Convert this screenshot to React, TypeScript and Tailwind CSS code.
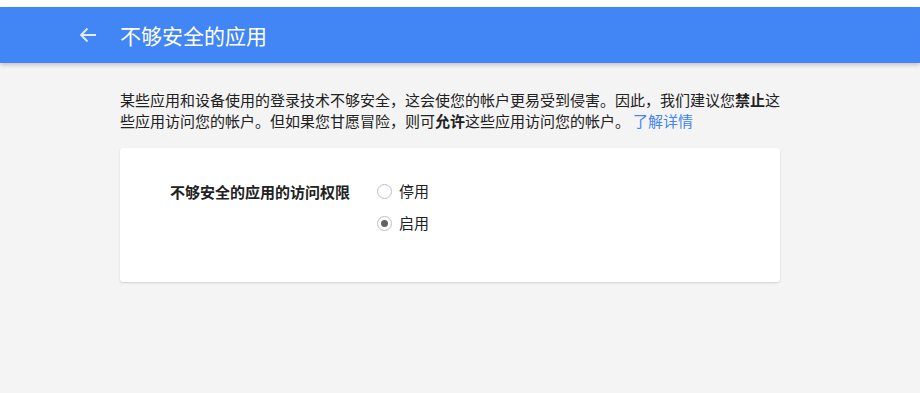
import React from "react";

function Radio({ checked, label }: { checked: boolean; label: string }) {
  return (
    <div className="flex items-center h-[20px]">
      <span className="w-[15px] h-[15px] rounded-full border border-[#bdbdbd] bg-white flex items-center justify-center">
        {checked && <span className="w-[7px] h-[7px] rounded-full bg-[#616161]" />}
      </span>
      <span className="ml-[7px] text-[15px] text-[#212121]">{label}</span>
    </div>
  );
}

export default function App() {
  return (
    <div
      className="w-[920px] h-[393px] bg-[#f4f4f4] overflow-hidden"
      style={{ fontFamily: '"Noto Sans CJK SC", "Noto Sans", sans-serif' }}
    >
      <div className="h-[7px] bg-white" />
      <div className="h-[56px] bg-[#4285f4] flex items-center shadow-[0_2px_4px_rgba(0,0,0,0.2)] relative">
        <svg className="ml-[78px] w-[20px] h-[20px]" viewBox="0 0 20 20" fill="none">
          <path d="M18 10H3M9.5 3.5L3 10l6.5 6.5" stroke="#e3ecfd" strokeWidth="1.8" />
        </svg>
        <span className="ml-[22px] text-[21px] text-white leading-none">不够安全的应用</span>
      </div>
      <div className="w-[660px] ml-[120px] pt-[26px]">
        <p className="w-[668px] text-[15px] leading-[21px] text-[#212121]">
          某些应用和设备使用的登录技术不够安全，这会使您的帐户更易受到侵害。因此，我们建议您<b>禁止</b>这些应用访问您的帐户。但如果您甘愿冒险，则可<b>允许</b>这些应用访问您的帐户。
          <a className="ml-[3px] text-[#4285f4]">了解详情</a>
        </p>
        <div className="mt-[17px] h-[134px] bg-white rounded-[3px] shadow-[0_1px_2px_rgba(0,0,0,0.15)] flex pt-[33px] pl-[50px]">
          <div className="w-[207px] text-[15px] font-bold text-[#212121] leading-[20px] pt-[1px]">
            不够安全的应用的访问权限
          </div>
          <div className="flex flex-col gap-[12px]">
            <Radio checked={false} label="停用" />
            <Radio checked={true} label="启用" />
          </div>
        </div>
      </div>
    </div>
  );
}
